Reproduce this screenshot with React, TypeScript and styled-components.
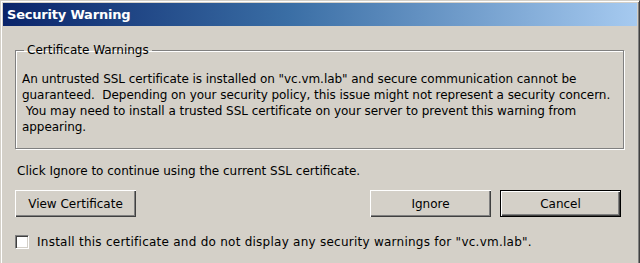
import styled, { createGlobalStyle } from "styled-components";

const GlobalStyle = createGlobalStyle`
  html, body {
    margin: 0;
    padding: 0;
    background: #d4d0c8;
    overflow: hidden;
  }
`;

const host = "vc.vm.lab";

const messageLines = [
  `An untrusted SSL certificate is installed on "${host}" and secure communication cannot be`,
  "guaranteed.\u00a0 Depending on your security policy, this issue might not represent a security concern.",
  "\u00a0You may need to install a trusted SSL certificate on your server to prevent this warning from",
  "appearing.",
];

export default function App() {
  return (
    <>
      <GlobalStyle />
      <StyledWindow>
        <StyledTitleBar>Security Warning</StyledTitleBar>
        <StyledContent>
          <StyledGroup>
            <StyledLegend>Certificate Warnings</StyledLegend>
            {messageLines.map((line) => (
              <StyledMessageLine key={line}>{line}</StyledMessageLine>
            ))}
          </StyledGroup>

          <StyledHint>
            Click Ignore to continue using the current SSL certificate.
          </StyledHint>

          <StyledButtonRow>
            <StyledButton>View Certificate</StyledButton>
            <StyledSpacer />
            <StyledButton>Ignore</StyledButton>
            <StyledButton $isDefault>Cancel</StyledButton>
          </StyledButtonRow>

          <StyledCheckRow>
            <StyledCheckbox />
            <StyledCheckLabel>
              Install this certificate and do not display any security warnings
              for "{host}".
            </StyledCheckLabel>
          </StyledCheckRow>
        </StyledContent>
      </StyledWindow>
    </>
  );
}

const StyledWindow = styled.div`
  box-sizing: border-box;
  width: 640px;
  height: 280px;
  background: #d4d0c8;
  border-top: 1px solid #d4d0c8;
  border-left: 1px solid #d4d0c8;
  border-right: 1px solid #404040;
  box-shadow: inset 1px 1px 0 #fff, inset -1px 0 0 #808080;
  padding: 2px 2px 0 2px;
  font-family: "DejaVu Sans", Verdana, sans-serif;
  font-size: 12px;
  color: #000;
`;

const StyledTitleBar = styled.div`
  height: 23px;
  display: flex;
  align-items: center;
  padding-left: 4px;
  background: linear-gradient(to right, #0a246a 0%, #3a6ea5 45%, #a6caf0 100%);
  color: #fff;
  font-weight: bold;
  font-size: 13px;
  letter-spacing: -0.2px;
`;

const StyledContent = styled.div`
  padding: 0 13px 0 12px;
`;

const StyledGroup = styled.fieldset`
  margin: 17px 0 0 0;
  padding: 14px 6px 13px 6px;
  border: 1px solid #808080;
  box-shadow: 1px 1px 0 #fff, inset 1px 1px 0 #fff;
  border-radius: 0;
  letter-spacing: -0.05px;
`;

const StyledLegend = styled.legend`
  padding: 0 3px;
  margin-left: 2px;
  line-height: 14px;
  letter-spacing: 0;
`;

const StyledMessageLine = styled.div`
  line-height: 16px;
  white-space: pre;
`;

const StyledHint = styled.div`
  margin-top: 14px;
  padding-left: 2px;
  line-height: 16px;
`;

const StyledButtonRow = styled.div`
  display: flex;
  gap: 9px;
  margin-top: 11px;
  margin-right: 3px;
`;

const StyledSpacer = styled.div`
  flex: 1;
`;

const StyledButton = styled.button<{ $isDefault?: boolean }>`
  box-sizing: border-box;
  width: 121px;
  height: 27px;
  padding: 0;
  font: inherit;
  color: #000;
  background: #d4d0c8;
  border: ${(props) => (props.$isDefault ? "1px solid #000" : "none")};
  box-shadow: inset 1px 1px 0 #fff, inset -1px -1px 0 #404040,
    inset -2px -2px 0 #808080;
`;

const StyledCheckRow = styled.div`
  display: flex;
  align-items: center;
  gap: 8px;
  margin-top: 17px;
`;

const StyledCheckLabel = styled.span`
  line-height: 16px;
  letter-spacing: 0.25px;
`;

const StyledCheckbox = styled.span`
  box-sizing: border-box;
  width: 14px;
  height: 14px;
  background: #fff;
  border-top: 1px solid #808080;
  border-left: 1px solid #808080;
  border-right: 1px solid #fff;
  border-bottom: 1px solid #fff;
  box-shadow: inset 1px 1px 0 #404040, inset -1px -1px 0 #d4d0c8;
`;
